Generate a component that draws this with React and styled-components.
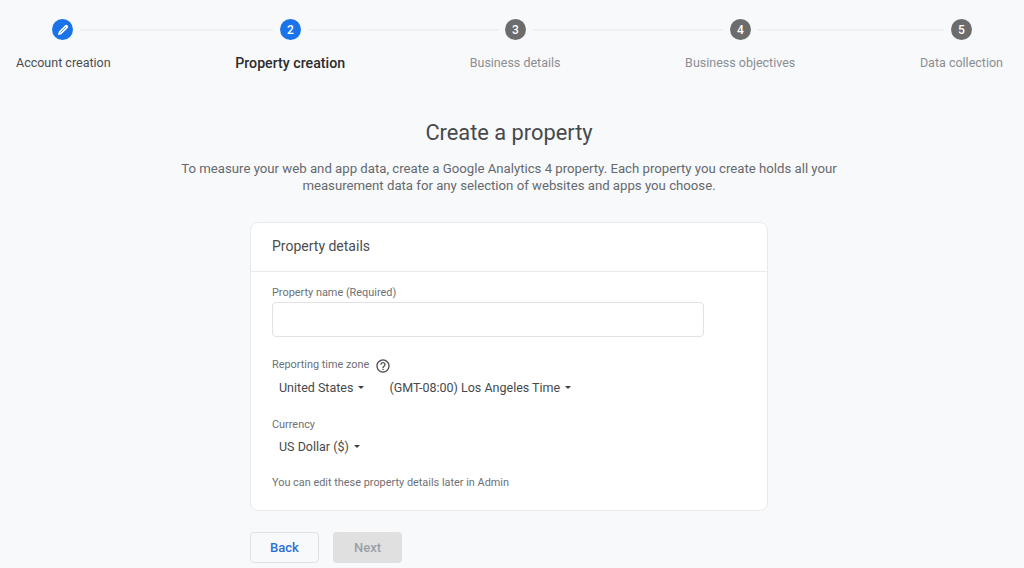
import React from "react";
import styled, { createGlobalStyle } from "styled-components";

const GlobalStyle = createGlobalStyle`
  html, body {
    margin: 0;
    height: 568px;
    overflow: hidden;
    background: #f8f9fa;
    font-family: Roboto, "Liberation Sans", sans-serif;
  }
`;

const STEPS = [
  { id: 1, label: "Account creation", state: "done", lineWidth: 193 },
  { id: 2, label: "Property creation", state: "active", lineWidth: 190 },
  { id: 3, label: "Business details", state: "todo", lineWidth: 190 },
  { id: 4, label: "Business objectives", state: "todo", lineWidth: 186 },
  { id: 5, label: "Data collection", state: "todo" },
];

const PencilIcon = () => (
  <svg width="14" height="14" viewBox="0 0 24 24">
    <path fill="#fff" d="M3.5 20.5l1.2-5.6L15.6 4a2.6 2.6 0 0 1 3.7 0l.7.7a2.6 2.6 0 0 1 0 3.7L9.1 19.3z" />
    <path stroke="#1a73e8" strokeWidth="1.3" fill="none" d="M7.5 16.5l9.5-9.5" />
  </svg>
);

const HelpIcon = () => (
  <svg width="16" height="16" viewBox="0 0 24 24" fill="#4f5256">
    <path d="M11 18h2v-2h-2v2zm1-16C6.48 2 2 6.48 2 12s4.48 10 10 10 10-4.48 10-10S17.52 2 12 2zm0 18c-4.41 0-8-3.59-8-8s3.59-8 8-8 8 3.59 8 8-3.59 8-8 8zm0-14c-2.21 0-4 1.79-4 4h2c0-1.1.9-2 2-2s2 .9 2 2c0 2-3 1.75-3 5h2c0-2.25 3-2.5 3-5 0-2.21-1.79-4-4-4z" />
  </svg>
);

const App = () => (
  <Page>
    <GlobalStyle />
    <Stepper>
      <Track>
        {STEPS.map((step) => (
          <React.Fragment key={step.id}>
            <Circle $state={step.state}>
              {step.state === "done" ? <PencilIcon /> : step.id}
            </Circle>
            {step.lineWidth && <Line $width={step.lineWidth} />}
          </React.Fragment>
        ))}
      </Track>
      <Labels>
        {STEPS.map((step) => (
          <StepLabel key={step.id} $state={step.state}>
            {step.label}
          </StepLabel>
        ))}
      </Labels>
    </Stepper>

    <Main>
      <Title>Create a property</Title>
      <Intro>
        To measure your web and app data, create a Google Analytics 4 property. Each property you create holds all your
        <br />
        measurement data for any selection of websites and apps you choose.
      </Intro>

      <Column>
        <Card>
          <CardHeader>Property details</CardHeader>
          <CardBody>
            <FieldLabel>Property name (Required)</FieldLabel>
            <NameInput />

            <TimeZoneLabel>
              Reporting time zone
              <HelpButton>
                <HelpIcon />
              </HelpButton>
            </TimeZoneLabel>
            <SelectRow>
              <Dropdown>United States</Dropdown>
              <Dropdown>(GMT-08:00) Los Angeles Time</Dropdown>
            </SelectRow>

            <CurrencyLabel>Currency</CurrencyLabel>
            <SelectRow>
              <Dropdown>US Dollar ($)</Dropdown>
            </SelectRow>

            <Hint>You can edit these property details later in Admin</Hint>
          </CardBody>
        </Card>

        <Actions>
          <BackButton>Back</BackButton>
          <NextButton disabled>Next</NextButton>
        </Actions>
      </Column>
    </Main>
  </Page>
);

const Page = styled.div`
  height: 568px;
  overflow: hidden;
`;

const Stepper = styled.div`
  padding: 19px 21px 0 16px;
`;

const Track = styled.div`
  display: flex;
  align-items: center;
  padding-left: 36px;
`;

const Circle = styled.div`
  flex: none;
  display: flex;
  align-items: center;
  justify-content: center;
  width: 21px;
  height: 21px;
  border-radius: 50%;
  font-size: 12px;
  font-weight: 500;
  color: #fff;
  background: ${(p) => (p.$state === "todo" ? "#6c6c6c" : "#1a73e8")};
`;

const Line = styled.div`
  flex: none;
  width: ${(p) => p.$width}px;
  height: 2px;
  margin: 0 7px;
  background: #eff0f2;
`;

const Labels = styled.div`
  display: flex;
  justify-content: space-between;
  margin-top: 15px;
`;

const StepLabel = styled.div`
  line-height: 16px;
  font-weight: ${(p) => (p.$state === "active" ? 500 : 400)};
  font-size: ${(p) => (p.$state === "active" ? "14.2px" : "12.5px")};
  color: ${(p) => (p.$state === "todo" ? "#8a8e93" : p.$state === "active" ? "#2b2c2f" : "#4a4d50")};
`;

const Main = styled.main`
  display: flex;
  flex-direction: column;
  align-items: center;
  padding-right: 6px;
`;

const Title = styled.h1`
  margin: 48px 0 0;
  font-size: 21.8px;
  line-height: 28px;
  font-weight: 400;
  color: #46494c;
`;

const Intro = styled.p`
  margin: 13px 0 0;
  font-size: 13.2px;
  line-height: 17px;
  text-align: center;
  color: #65696e;
`;

const Column = styled.div`
  width: 518px;
  margin-top: 28px;
`;

const Card = styled.section`
  box-sizing: border-box;
  height: 289px;
  background: #fff;
  border: 1px solid #e8eaed;
  border-radius: 8px;
`;

const CardHeader = styled.div`
  box-sizing: border-box;
  height: 49px;
  padding: 14px 21px 0;
  font-size: 14px;
  line-height: 18px;
  color: #4a4d50;
  border-bottom: 1px solid #e8eaed;
`;

const CardBody = styled.div`
  padding: 14px 21px 0;
`;

const FieldLabel = styled.div`
  font-size: 10.9px;
  line-height: 14px;
  color: #6d7176;
`;

const NameInput = styled.div`
  box-sizing: border-box;
  width: 432px;
  height: 35px;
  margin-top: 2px;
  border: 1px solid #e0e2e5;
  border-radius: 4px;
`;

const TimeZoneLabel = styled(FieldLabel)`
  display: flex;
  align-items: center;
  height: 14px;
  margin-top: 21px;
`;

const HelpButton = styled.span`
  display: flex;
  margin: 2px 0 0 6px;
`;

const CurrencyLabel = styled(FieldLabel)`
  margin: 22px 0 -1px;
`;

const SelectRow = styled.div`
  display: flex;
  gap: 25px;
  margin-top: 7px;
  padding-left: 7px;
`;

const Dropdown = styled.div`
  display: flex;
  align-items: center;
  font-size: 12.5px;
  line-height: 17px;
  color: #46494c;

  &::after {
    content: "";
    margin-left: 5px;
    border-left: 3.5px solid transparent;
    border-right: 3.5px solid transparent;
    border-top: 3.5px solid #3c4043;
  }
`;

const Hint = styled.div`
  margin-top: 21px;
  font-size: 10.9px;
  line-height: 14px;
  color: #6d7176;
`;

const Actions = styled.div`
  display: flex;
  gap: 14px;
  margin-top: 21px;
`;

const Button = styled.button`
  box-sizing: border-box;
  width: 69px;
  height: 31px;
  padding: 0;
  border-radius: 4px;
  font-family: inherit;
  font-size: 13px;
  font-weight: 500;
`;

const BackButton = styled(Button)`
  background: #f8f9fa;
  border: 1px solid #e0e2e5;
  color: #2a6fd6;
`;

const NextButton = styled(Button)`
  background: #e0e0e0;
  border: none;
  color: #9aa0a6;
`;

export default App;
